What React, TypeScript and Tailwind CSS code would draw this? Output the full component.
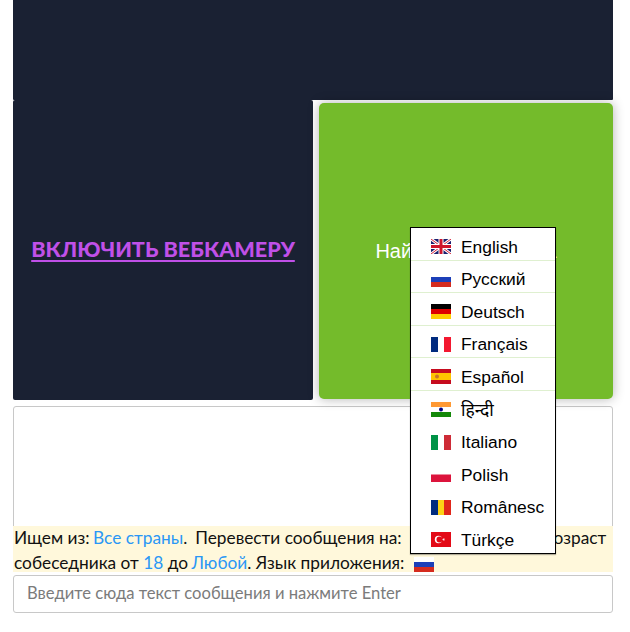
import React from "react";

const F = ({ children }: { children: React.ReactNode }) => (
  <svg width="20" height="15" viewBox="0 0 20 15" className="shrink-0">{children}</svg>
);

const flags: Record<string, React.ReactNode> = {
  en: (
    <F>
      <rect width="20" height="15" fill="#1b1f6e" />
      <path d="M0 0L20 15M20 0L0 15" stroke="#fff" strokeWidth="3" />
      <path d="M0 0L20 15M20 0L0 15" stroke="#d8213a" strokeWidth="1" />
      <path d="M10 0V15M0 7.5H20" stroke="#fff" strokeWidth="5" />
      <path d="M10 0V15M0 7.5H20" stroke="#cf142b" strokeWidth="3" />
    </F>
  ),
  ru: (
    <F>
      <rect width="20" height="5" fill="#fff" />
      <rect y="5" width="20" height="5" fill="#1c3fb8" />
      <rect y="10" width="20" height="5" fill="#d52b1e" />
    </F>
  ),
  de: (
    <F>
      <rect width="20" height="5" fill="#000" />
      <rect y="5" width="20" height="5" fill="#dd0000" />
      <rect y="10" width="20" height="5" fill="#ffce00" />
    </F>
  ),
  fr: (
    <F>
      <rect width="7" height="15" fill="#002b7f" />
      <rect x="13" width="7" height="15" fill="#f31830" />
    </F>
  ),
  es: (
    <F>
      <rect width="20" height="15" fill="#c60b1e" />
      <rect y="4" width="20" height="7" fill="#ffc400" />
      <circle cx="6" cy="7.5" r="2" fill="#c8752a" />
    </F>
  ),
  hi: (
    <F>
      <rect width="20" height="5" fill="#ff9933" />
      <rect y="10" width="20" height="5" fill="#138808" />
      <circle cx="10" cy="7.5" r="2" fill="#000080" />
    </F>
  ),
  it: (
    <F>
      <rect width="7" height="15" fill="#009246" />
      <rect x="13" width="7" height="15" fill="#ce2b37" />
    </F>
  ),
  pl: (
    <F>
      <rect y="7.5" width="20" height="7.5" fill="#dc143c" />
    </F>
  ),
  ro: (
    <F>
      <rect width="7" height="15" fill="#002b7f" />
      <rect x="7" width="6" height="15" fill="#fcd116" />
      <rect x="13" width="7" height="15" fill="#e0261a" />
    </F>
  ),
  tr: (
    <F>
      <rect width="20" height="15" fill="#e30a17" />
      <circle cx="7.5" cy="7.5" r="3.7" fill="#fff" />
      <circle cx="8.5" cy="7.5" r="3" fill="#e30a17" />
      <path d="M11 7.5l3-1-1.8 2.5V6l1.8 2.5z" fill="#fff" />
    </F>
  ),
};

const langs: [string, string, boolean][] = [
  ["en", "English", true],
  ["ru", "Русский", true],
  ["de", "Deutsch", true],
  ["fr", "Français", true],
  ["es", "Español", true],
  ["hi", "हिन्दी", false],
  ["it", "Italiano", false],
  ["pl", "Polish", false],
  ["ro", "Românesc", false],
  ["tr", "Türkçe", false],
];

export default function App() {
  return (
    <div className="relative w-[630px] h-[632px] bg-white overflow-hidden px-[13px] pr-[17px] font-['Lato','Liberation_Sans',sans-serif] text-[17.3px] text-[#111]">
      <div className="h-[100px] bg-[#1a2133] rounded-b-[1px]" />
      <div className="flex h-[300px]">
        <div className="w-[300px] bg-[#1a2133] rounded-[2px] flex items-center justify-center">
          <a className="text-[21.6px] leading-none font-black text-[#c050e8] underline decoration-2 underline-offset-[3px]">ВКЛЮЧИТЬ ВЕБКАМЕРУ</a>
        </div>
        <div className="flex-1 pl-[6px] pt-[3px] pb-px">
          <div className="h-full rounded-[5px] bg-[#74bb2b] shadow-[0_0_12px_rgba(0,0,0,0.3)] flex items-center justify-center font-['Liberation_Sans',sans-serif] text-[20px] text-white">
            Найти собеседника
          </div>
        </div>
      </div>
      <div className="mt-[6px] h-[166px] border border-[#c8c8c8] rounded-[3px] flex flex-col justify-end">
        <div className="h-[46px] bg-[#fff8db] leading-[26px] whitespace-nowrap overflow-hidden -mb-px -mx-px pl-px">
          <div className="-mt-[1px]">
            Ищем из: <span className="text-[#2a97f5] -ml-[1px]">Все страны</span>.<span className="ml-[8px]">Перевести сообщения на:</span>{" "}
            <span className="inline-block w-[132px]" /> Возраст
          </div>
          <div className="-mt-[1px] flex items-center">
            <span>
              собеседника от <span className="text-[#2a97f5]">18</span> до{" "}
              <span className="text-[#2a97f5] -ml-[1px]">Любой</span>. Язык приложения:
            </span>
            <span className="ml-[10px] mt-[2px]">{flags.ru}</span>
          </div>
        </div>
      </div>
      <div className="mt-[3px] h-[38px] border border-[#c8c8c8] rounded-[3px] flex items-center pl-[13px] pb-[2px] text-[16.6px] text-[#7b7b7b]">
        Введите сюда текст сообщения и нажмите Enter
      </div>

      <div className="absolute left-[410px] top-[227px] w-[146px] h-[327px] bg-white border border-black shadow-[0_1px_1px_rgba(0,0,0,0.3)] font-['Liberation_Sans','Noto_Sans',sans-serif] text-[17.4px] text-black">
        {langs.map(([c, n, sep]) => (
          <div
            key={c}
            className={`h-[32.5px] flex items-center pt-[6px] pl-[20px] gap-[10px] ${sep ? "border-b border-[#dff0d0]" : ""}`}
          >
            {flags[c]}
            <span>{n}</span>
          </div>
        ))}
      </div>
    </div>
  );
}
